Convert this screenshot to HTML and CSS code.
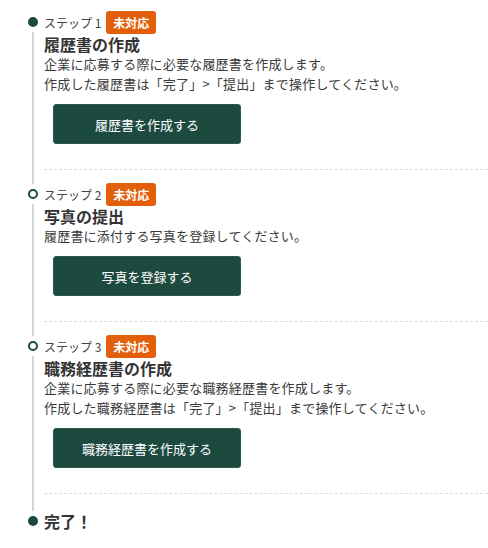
FILE: index.html
```html
<!DOCTYPE html>
<html lang="ja">
<head>
<meta charset="utf-8">
<link rel="stylesheet" href="styles.css">
</head>
<body>
<div class="timeline">
  <div class="step done">
    <div class="label-row"><span class="label">ステップ 1</span><span class="badge">未対応</span></div>
    <div class="title">履歴書の作成</div>
    <p class="desc">企業に応募する際に必要な履歴書を作成します。<br>作成した履歴書は「完了」&gt;「提出」まで操作してください。</p>
    <button class="btn">履歴書を作成する</button>
  </div>
  <div class="step">
    <div class="label-row"><span class="label">ステップ 2</span><span class="badge">未対応</span></div>
    <div class="title">写真の提出</div>
    <p class="desc">履歴書に添付する写真を登録してください。</p>
    <button class="btn">写真を登録する</button>
  </div>
  <div class="step">
    <div class="label-row"><span class="label">ステップ 3</span><span class="badge">未対応</span></div>
    <div class="title">職務経歴書の作成</div>
    <p class="desc">企業に応募する際に必要な職務経歴書を作成します。<br>作成した職務経歴書は「完了」&gt;「提出」まで操作してください。</p>
    <button class="btn">職務経歴書を作成する</button>
  </div>
  <div class="finish">完了！</div>
</div>
</body>
</html>
```
FILE: styles.css
```css
html, body {
  margin: 0;
  padding: 0;
  background: #fff;
}
body {
  font-family: "Noto Sans CJK JP", "Noto Sans", sans-serif;
  color: #333;
}
.timeline {
  padding-left: 44px;
}
.step {
  position: relative;
  padding: 12px 0 25px 0;
  border-bottom: 1px dashed #dcdcdc;
}
.step:first-child {
  padding-top: 10px;
}
.step::before,
.finish::before {
  content: "";
  position: absolute;
  left: -12px;
  top: 0;
  bottom: -1px;
  width: 2px;
  background: #d6d6d6;
}
.step:first-child::before {
  top: 22px;
}
.step::after,
.finish::after {
  content: "";
  position: absolute;
  left: -16px;
  top: 19px;
  width: 6px;
  height: 6px;
  border: 2px solid #1d4a3f;
  border-radius: 50%;
  background: #fff;
  box-shadow: 0 0 0 5px #fff;
}
.step:first-child::after {
  top: 17px;
}
.step.done::after,
.finish::after {
  background: #1d4a3f;
}
.label-row {
  display: flex;
  align-items: center;
  height: 24px;
}
.label {
  font-size: 12px;
  color: #444;
}
.badge {
  margin-left: 5px;
  background: #e35f0a;
  color: #fff;
  font-size: 12px;
  font-weight: bold;
  line-height: 23px;
  height: 23px;
  padding: 0 7px;
  border-radius: 3px;
}
.title {
  font-size: 16px;
  font-weight: bold;
  line-height: 20px;
  color: #333;
}
.desc {
  margin: 0;
  font-size: 13px;
  line-height: 20px;
  letter-spacing: 0.2px;
  color: #3a3a3a;
}
.btn {
  display: block;
  margin: 10px 0 0 9px;
  width: 188px;
  height: 40px;
  background: #1d4a3f;
  color: #fff;
  border: 1px solid #2b5a4e;
  border-radius: 3px;
  font-family: inherit;
  font-size: 13px;
  padding: 0;
}
.finish {
  position: relative;
  padding-top: 17px;
  font-size: 16px;
  font-weight: bold;
  line-height: 20px;
  color: #333;
}
.finish::before {
  bottom: auto;
  height: 27px;
}
.finish::after {
  top: 22px;
}
```
